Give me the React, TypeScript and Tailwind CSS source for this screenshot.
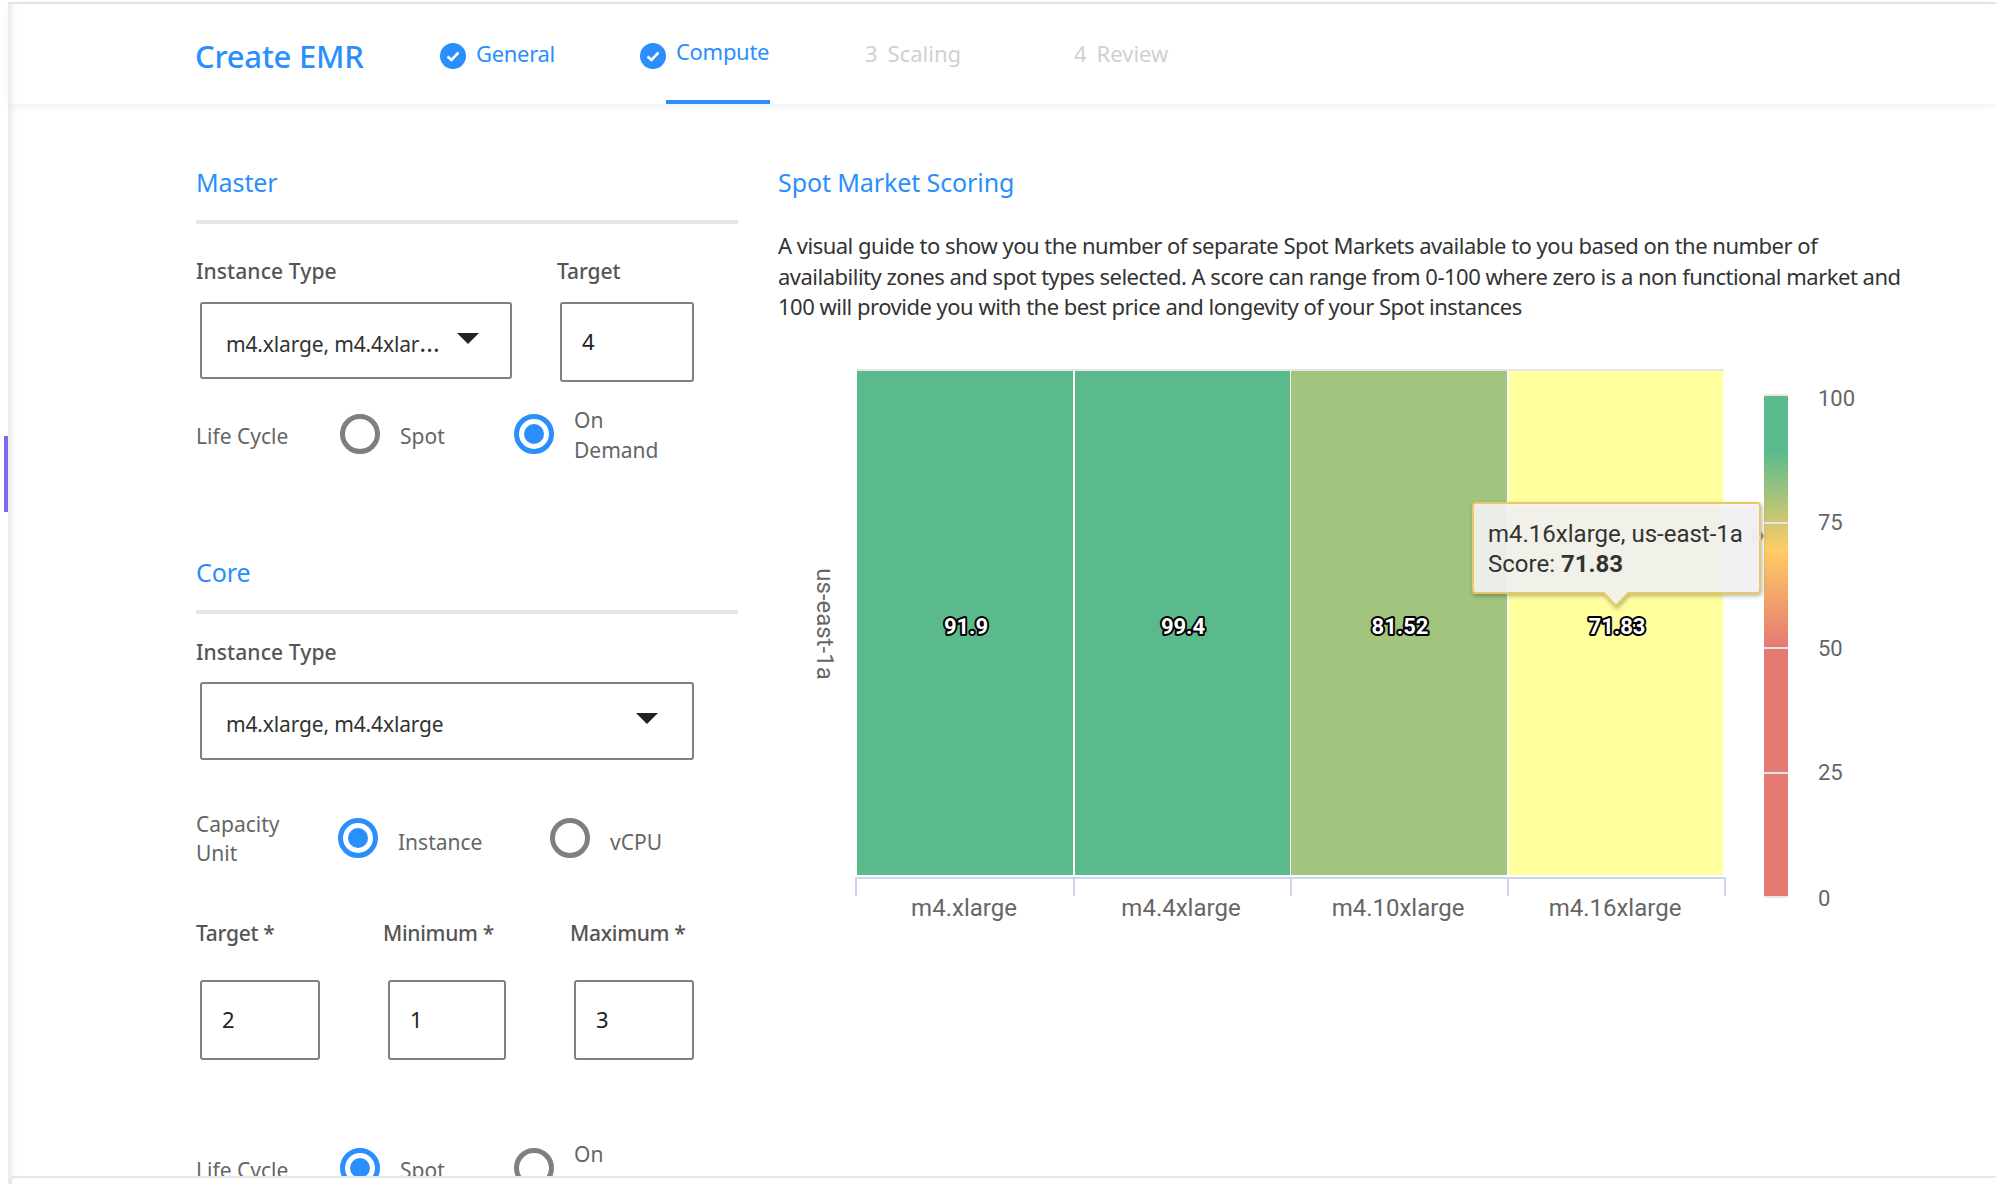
import React from 'react';

const sans = 'font-["Noto_Sans",sans-serif]';

const Tab: React.FC<{ label: string; step?: string; width: string; active?: boolean }> = ({ label, step, width, active }) => (
  <div className={`relative flex h-full items-center ${width}`}>
    {step ? (
      <span className="mb-[1px] flex gap-[10px] text-[22px] tracking-[0px] text-[#d0d0d0]">
        <span>{step}</span>
        <span>{label}</span>
      </span>
    ) : (
      <>
        <svg width="26" height="26" viewBox="0 0 26 26" className="mt-[3px]">
          <circle cx="13" cy="13" r="13" fill="#2a8ffc" />
          <path d="M7.5 13.5 L11.5 17 L18.5 9.5" fill="none" stroke="#fff" strokeWidth="2.6" />
        </svg>
        <span className={`ml-[10px] text-[22px] tracking-[-0.3px] text-[#2a8ffc] ${active ? 'mb-[5px]' : 'mb-[1px]'}`}>{label}</span>
      </>
    )}
    {active && <span className="absolute bottom-0 left-[26px] h-[4px] w-[104px] bg-[#2a8ffc]" />}
  </div>
);

const SectionTitle: React.FC<{ title: string; rule?: boolean }> = ({ title, rule }) => (
  <div className={rule ? 'h-[60px] border-b-4 border-[#e6e6e6]' : 'h-[36px]'}>
    <h2 className="text-[25px] leading-[36px] tracking-[-0.1px] text-[#2a8ffc]">{title}</h2>
  </div>
);

const Radio: React.FC<{ on?: boolean }> = ({ on }) => (
  <span className={`flex h-[40px] w-[40px] shrink-0 items-center justify-center rounded-full border-[5px] ${on ? 'border-[#2a8ffc]' : 'border-[#7f7f7f]'}`}>
    {on && <span className="h-[20px] w-[20px] rounded-full bg-[#2a8ffc]" />}
  </span>
);

const LifeCycle: React.FC<{ spot?: boolean }> = ({ spot }) => (
  <div className="flex h-[60px] items-center text-[21px] leading-[30px] text-[#666]">
    <span className="w-[144px]">Life Cycle</span>
    <span className="mb-[5px]"><Radio on={spot} /></span>
    <span className="ml-[20px] w-[114px]">Spot</span>
    <span className="mb-[5px]"><Radio on={!spot} /></span>
    <span className="mb-[2px] ml-[20px]">On<br />Demand</span>
  </div>
);

const Field: React.FC<{ label: string; tracking?: string }> = ({ label, tracking }) => (
  <div className={`h-[30px] text-[21px] font-medium leading-[28px] text-[#555] ${tracking ?? 'tracking-[-0.3px]'}`}>{label}</div>
);

const Caret = () => (
  <svg width="22" height="11" viewBox="0 0 22 11">
    <path d="M0 0 H22 L11 11 Z" fill="#222" />
  </svg>
);

const NumberBox: React.FC<{ value: string; width: string; margin?: string }> = ({ value, width, margin }) => (
  <div className={`flex h-[80px] items-center rounded-[3px] border-2 border-[#808080] pl-[20px] pb-[2px] text-[22px] text-[#222] ${margin ?? 'ml-[4px]'} ${width}`}>
    {value}
  </div>
);

const SelectBox: React.FC<{ children: React.ReactNode; width: string; caretLeft: string; height: string }> = ({ children, width, caretLeft, height }) => (
  <div className={`relative ml-[4px] flex items-center rounded-[3px] border-2 border-[#808080] pl-[24px] pt-[8px] text-[21px] tracking-[-0.15px] text-[#333] ${width} ${height}`}>
    <span>{children}</span>
    <span className={`absolute top-[29px] flex ${caretLeft}`}><Caret /></span>
  </div>
);

const cols = [
  { x: 857, w: 216, fill: '#5bba8c', label: 'm4.xlarge', score: '91.9', cx: 965 },
  { x: 1075, w: 215, fill: '#5bba8c', label: 'm4.4xlarge', score: '99.4', cx: 1182 },
  { x: 1291, w: 216, fill: '#a1c57f', label: 'm4.10xlarge', score: '81.52', cx: 1399 },
  { x: 1509, w: 214, fill: '#ffff9e', label: 'm4.16xlarge', score: '71.83', cx: 1616 },
];

const legend = [
  { y: 406, text: '100' },
  { y: 530, text: '75' },
  { y: 656, text: '50' },
  { y: 780, text: '25' },
  { y: 906, text: '0' },
];

const Heatmap = () => (
  <svg width="1100" height="580" viewBox="778 360 1100 580" className="font-['Roboto',sans-serif]">
    <defs>
      <linearGradient id="scale" x1="0" y1="0" x2="0" y2="1">
        <stop offset="0" stopColor="#5bba8c" />
        <stop offset="0.11" stopColor="#5bba8c" />
        <stop offset="0.31" stopColor="#ffcc66" />
        <stop offset="0.5" stopColor="#e57a73" />
        <stop offset="1" stopColor="#e57a73" />
      </linearGradient>
    </defs>

    <rect x="857" y="369" width="867" height="2" fill="#e6e6e6" />
    {cols.map(c => (
      <g key={c.label}>
        <rect x={c.x} y="371" width={c.w} height="504" fill={c.fill} />
        <text
          x={c.cx + 1}
          y="634"
          textAnchor="middle"
          fontSize="22"
          fontWeight="700"
          fill="#fff"
          stroke="#000"
          strokeWidth="4"
          strokeLinejoin="round"
          paintOrder="stroke"
        >
          {c.score}
        </text>
        <text x={c.cx - 1} y="916" textAnchor="middle" fontSize="24" fill="#666">{c.label}</text>
      </g>
    ))}

    {/* x axis */}
    <rect x="855" y="877" width="871" height="2" fill="#ccd6eb" />
    {[855, 1073, 1290, 1507, 1724].map(x => (
      <rect key={x} x={x} y="877" width="2" height="19" fill="#ccd6eb" />
    ))}

    <text x="817" y="624" transform="rotate(90 817 624)" textAnchor="middle" fontSize="24" fill="#666">us-east-1a</text>

    {/* colour scale */}
    <rect x="1764" y="394" width="24" height="504" fill="#e6e6e6" />
    <rect x="1764" y="396" width="24" height="500" fill="url(#scale)" />
    {[522, 647, 772].map(y => (
      <rect key={y} x="1764" y={y} width="24" height="2" fill="#e6e6e6" />
    ))}
    {legend.map(l => (
      <text key={l.text} x="1818" y={l.y} fontSize="22" fill="#666">{l.text}</text>
    ))}

    {/* tooltip */}
    <path
      d="M1476 503 H1757 Q1760 503 1760 506 V590 Q1760 593 1757 593 H1628 L1616 606 L1604 593 H1476 Q1473 593 1473 590 V506 Q1473 503 1476 503 Z"
      fill="rgba(247,247,247,0.9)"
      stroke="#e8c96a"
      strokeWidth="2"
      className="[filter:drop-shadow(1px_2px_2px_rgba(0,0,0,0.3))]"
    />
    <path d="M1752 527 L1760 537 L1752 548 Z" fill="#eeeeee" />
    <path d="M1761 531 L1764 536 L1761 541 Z" fill="#888" />
    <text x="1488" y="542" fontSize="24" fill="#333">m4.16xlarge, us-east-1a</text>
    <text x="1488" y="572" fontSize="24" fill="#333">
      Score: <tspan fontWeight="700">71.83</tspan>
    </text>
  </svg>
);

export default function App() {
  return (
    <div className={`relative flex h-[1184px] w-[1996px] overflow-hidden bg-white ${sans}`}>
      {/* left rail */}
      <div className="w-[8px] shrink-0 pt-[436px] pl-[4px]">
        <div className="h-[76px] w-[4px] bg-[#7b68ee]" />
      </div>

      <div className="mt-[2px] flex-1 border-t-2 border-[#e6e6e6] shadow-[inset_8px_0_8px_-6px_rgba(0,0,0,0.12)]">
        {/* header */}
        <header className="flex h-[100px] items-center pl-[187px] shadow-[0_2px_8px_rgba(0,0,0,0.06)]">
          <div className="w-[245px] pt-[4px] text-[31px] font-medium tracking-[-0.2px] text-[#2a8ffc]">Create EMR</div>
          <Tab label="General" width="w-[200px]" />
          <Tab label="Compute" width="w-[225px]" active />
          <Tab label="Scaling" step="3" width="w-[209px]" />
          <Tab label="Review" step="4" width="w-[200px]" />
        </header>

        <main className="flex pl-[188px] pt-[60px]">
          {/* form column */}
          <section className="w-[542px] shrink-0">
            <SectionTitle title="Master" rule />
            <div className="mt-[33px] flex">
              <div className="w-[361px]">
                <Field label="Instance Type" tracking="tracking-[0.1px]" />
                <div className="mt-[15px]">
                  <SelectBox width="w-[312px]" height="h-[77px]" caretLeft="left-[255px]">
                    m4.xlarge, m4.4xlar<span className="text-[26px] leading-none">…</span>
                  </SelectBox>
                </div>
              </div>
              <div>
                <Field label="Target" tracking="tracking-[-0.1px]" />
                <div className="mt-[15px]">
                  <NumberBox value="4" width="w-[134px]" margin="ml-[3px]" />
                </div>
              </div>
            </div>
            <div className="mt-[24px]">
              <LifeCycle />
            </div>

            <div className="mt-[88px]">
              <SectionTitle title="Core" rule />
            </div>
            <div className="mt-[24px]">
              <Field label="Instance Type" tracking="tracking-[0.1px]" />
            </div>
            <div className="mt-[14px]">
              <SelectBox width="w-[494px]" height="h-[78px]" caretLeft="left-[434px]">m4.xlarge, m4.4xlarge</SelectBox>
            </div>

            <div className="mt-[50px] flex h-[59px] text-[21px] leading-[29px] text-[#666]">
              <span className="w-[142px]">Capacity<br />Unit</span>
              <span className="mt-[8px]"><Radio on /></span>
              <span className="ml-[20px] mt-[18px] w-[152px]">Instance</span>
              <span className="mt-[8px]"><Radio /></span>
              <span className="ml-[20px] mt-[18px]">vCPU</span>
            </div>

            <div className="mt-[50px] grid grid-cols-[187px_187px_168px]">
              <Field label="Target *" />
              <Field label="Minimum *" />
              <Field label="Maximum *" />
            </div>
            <div className="mt-[31px] grid grid-cols-[188px_186px_168px]">
              <NumberBox value="2" width="w-[120px]" />
              <NumberBox value="1" width="w-[118px]" />
              <NumberBox value="3" width="w-[120px]" />
            </div>

            <div className="mt-[80px]">
              <LifeCycle spot />
            </div>
          </section>

          {/* scoring column */}
          <section className="ml-[40px] flex-1">
            <SectionTitle title="Spot Market Scoring" />
            <p className="mt-[30px] h-[93px] whitespace-nowrap text-[22px] leading-[30.5px] tracking-[-0.5px] text-[#333]">
              A visual guide to show you the number of separate Spot Markets available to you based on the number of<br />
              availability zones and spot types selected. A score can range from 0-100 where zero is a non functional market and<br />
              100 will provide you with the best price and longevity of your Spot instances
            </p>
            <div className="mt-[37px]">
              <Heatmap />
            </div>
          </section>
        </main>
      </div>

      {/* bottom bar */}
      <div className="absolute bottom-0 left-[10px] right-0 top-[1176px] rounded-tl-[4px] border-l-2 border-t-2 border-[#e6e6e6] bg-white" />
    </div>
  );
}
